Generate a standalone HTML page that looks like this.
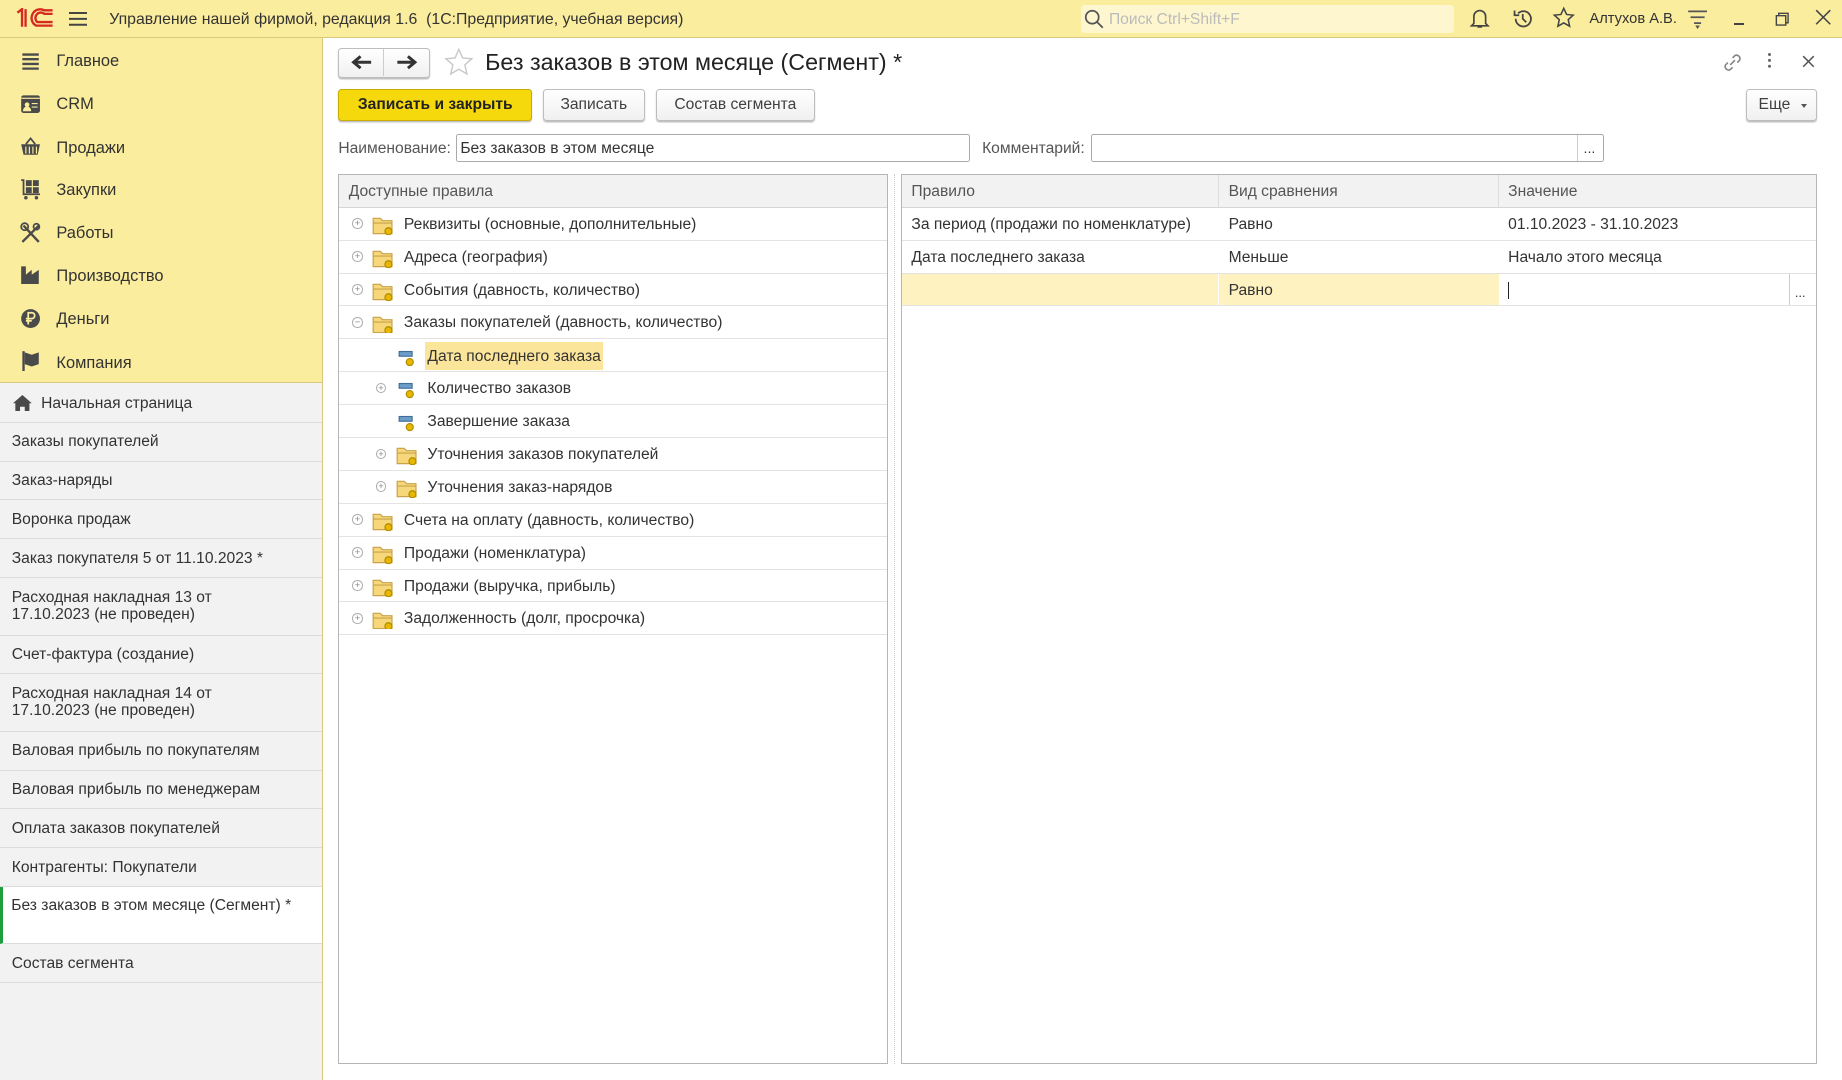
<!DOCTYPE html>
<html><head><meta charset="utf-8"><style>
*{box-sizing:border-box;margin:0;padding:0}
html,body{width:1842px;height:1080px;overflow:hidden;background:#fff}
#w{width:1568px;height:920px;zoom:1.17474;position:relative;font-family:"Liberation Sans",Arial,sans-serif;font-size:13.3px;color:#404040;overflow:hidden}
.a{position:absolute}
#top{left:0;top:0;width:1568px;height:32px;background:#fbed9e;border-bottom:1px solid #d8c97e}
#side{left:0;top:32px;width:275px;height:888px;background:#f2f2f2;border-right:1px solid #d8c97e}
#sideY{left:0;top:0;width:274px;height:294px;background:#fbed9e;border-bottom:1px solid #d8c97e}
.mi{position:absolute;left:48px;font-size:14px;color:#333}
.ic{position:absolute;left:17px;width:18px;height:18px}
.li{position:absolute;left:0;width:274px;border-bottom:1px solid #dcdcdc;padding:9px 30px 7px 10px;line-height:15px;color:#333}
.btn{position:absolute;height:27px;border:1px solid #bdbdbd;border-radius:3px;background:linear-gradient(#fff,#f0f0f0);box-shadow:0 1px 1px rgba(0,0,0,.25);text-align:center;line-height:26px;color:#404040}
.inp{position:absolute;height:24px;border:1px solid #aaa;border-radius:2px;background:#fff;padding-left:3px;line-height:23px;color:#333}
.tbl{position:absolute;border:1px solid #b5b5b5;background:#fff}
.th{position:absolute;top:0;height:28px;background:#f2f2f2;border-bottom:1px solid #d5d5d5;line-height:29px;padding-left:8px;color:#555}
.row{position:absolute;left:0;right:0;height:28px;border-bottom:1px solid #e3e3e3;line-height:29px}
.pl{position:absolute;top:9px;width:9px;height:9px;border:1px solid #aaa;border-radius:50%;font-size:8px;line-height:7px;text-align:center;color:#888}
.fd{position:absolute;top:7px}
.tx{position:absolute;color:#333}
</style></head><body><div id="w">
<div id="top" class="a">
 <svg class="a" style="left:13px;top:7px" width="34" height="17" viewBox="0 0 34 17"><g fill="none" stroke="#d42a20" stroke-width="2"><path d="M2 4 L6 1 V16"/><path d="M9 1 V16"/><path d="M32 15 H18 A7 7 0 1 1 25 2 H32"/><path d="M32 12 H19 A4 4 0 1 1 25 5 H32"/></g></svg>
 <div class="a" style="left:59px;top:10px;width:15px;height:2px;background:#444;box-shadow:0 5px 0 #444,0 10px 0 #444"></div>
 <div class="a" style="left:93px;top:9px;font-size:13.5px;color:#333">Управление нашей фирмой, редакция 1.6 &nbsp;(1С:Предприятие, учебная версия)</div>
 <div class="a" style="left:920px;top:4px;width:318px;height:24px;background:#fdf6cf;border-radius:3px"></div>
 <svg class="a" style="left:923px;top:8px" width="18" height="18"><circle cx="7" cy="7" r="5.5" fill="none" stroke="#555" stroke-width="1.5"/><path d="M11 11l5 5" stroke="#555" stroke-width="1.5"/></svg>
 <div class="a" style="left:944px;top:9px;color:#bbb">Поиск Ctrl+Shift+F</div>
 <svg class="a" style="left:1250px;top:6px" width="20" height="20"><path d="M5 14V8a5 5 0 0110 0v6l2 2H3z M8 17h4" fill="none" stroke="#444" stroke-width="1.4"/></svg>
 <svg class="a" style="left:1286px;top:6px" width="20" height="20"><path d="M4 10a6.5 6.5 0 1 0 2-4.6 M3 3v4h4 M10 6v4l3 3" fill="none" stroke="#444" stroke-width="1.5"/></svg>
 <svg class="a" style="left:1321px;top:5px" width="20" height="20"><path d="M10 2l2.4 5.2 5.6.6-4.2 3.8 1.2 5.6L10 14.4 5 17.2l1.2-5.6L2 7.8l5.6-.6z" fill="none" stroke="#444" stroke-width="1.3"/></svg>
 <div class="a" style="left:1353px;top:9px;font-size:12.5px;color:#333">Алтухов А.В.</div>
 <svg class="a" style="left:1436px;top:8px" width="18" height="18"><path d="M1 2h16M3 7h12M6 12h6" stroke="#555" stroke-width="1.5"/><path d="M7 14h4l-2 3z" fill="#555"/></svg>
 <div class="a" style="left:1476px;top:20px;width:9px;height:1px;background:#444"></div>
 <svg class="a" style="left:1510px;top:9px" width="14" height="14"><path d="M2 4h8v8H2z M4 4V2h8v8h-2" fill="none" stroke="#444" stroke-width="1.2"/></svg>
 <svg class="a" style="left:1545px;top:8px" width="14" height="14"><path d="M1 1l12 12M13 1L1 13" stroke="#444" stroke-width="1.3"/></svg>
</div>
<div id="side" class="a">
 <div id="sideY" class="a">
  <svg class="ic" style="top:11px" viewBox="0 0 18 18"><path d="M2 3h14M2 7h14M2 11h14M2 15h14" stroke="#4a4a4a" stroke-width="2"/></svg>
  <div class="mi" style="top:12px">Главное</div>
  <svg class="ic" style="top:47px" viewBox="0 0 18 18"><rect x="1" y="2" width="16" height="15" rx="2" fill="#4a4a4a"/><rect x="1" y="4" width="16" height="1" fill="#fbed9e"/><circle cx="6" cy="10" r="2" fill="#fbed9e"/><path d="M3 15a3 3 0 016 0zM10 9h5M10 12h5" fill="#fbed9e" stroke="#fbed9e"/></svg>
  <div class="mi" style="top:49px">CRM</div>
  <svg class="ic" style="top:84px" viewBox="0 0 18 18"><path d="M5 7l4-5 4 5" fill="none" stroke="#4a4a4a" stroke-width="1.5"/><path d="M1 7h16l-2 9H3z" fill="#4a4a4a"/><path d="M5 9v6M8 9v6M11 9v6M14 9v6" stroke="#fbed9e"/></svg>
  <div class="mi" style="top:86px">Продажи</div>
  <svg class="ic" style="top:120px" viewBox="0 0 18 18"><path d="M1 1h2v12h14" fill="none" stroke="#4a4a4a" stroke-width="1.5"/><rect x="5" y="1" width="5" height="5" fill="#4a4a4a"/><rect x="11" y="1" width="5" height="5" fill="#4a4a4a"/><rect x="5" y="7" width="5" height="5" fill="#4a4a4a"/><rect x="11" y="7" width="5" height="5" fill="#4a4a4a"/><circle cx="5" cy="16" r="1.5" fill="#4a4a4a"/><circle cx="14" cy="16" r="1.5" fill="#4a4a4a"/></svg>
  <div class="mi" style="top:122px">Закупки</div>
  <svg class="ic" style="top:157px" viewBox="0 0 18 18"><path d="M2 17L16 3M3 3l13 14" stroke="#4a4a4a" stroke-width="2"/><circle cx="4" cy="4" r="3" fill="none" stroke="#4a4a4a" stroke-width="1.5"/><circle cx="14" cy="4" r="2.5" fill="none" stroke="#4a4a4a" stroke-width="1.5"/></svg>
  <div class="mi" style="top:159px">Работы</div>
  <svg class="ic" style="top:193px" viewBox="0 0 18 18"><path d="M1 17V2h4v7l5-4v4l6-4v12z" fill="#4a4a4a"/></svg>
  <div class="mi" style="top:195px">Производство</div>
  <svg class="ic" style="top:230px" viewBox="0 0 18 18"><circle cx="9" cy="9" r="8" fill="#4a4a4a"/><path d="M7 14V4h3a2.5 2.5 0 010 5H5M5 11h5" fill="none" stroke="#fbed9e" stroke-width="1.5"/></svg>
  <div class="mi" style="top:232px">Деньги</div>
  <svg class="ic" style="top:266px" viewBox="0 0 18 18"><path d="M3 1v17" stroke="#4a4a4a" stroke-width="2"/><path d="M4 2l6 2 6-2v10l-6 2-6-2z" fill="#4a4a4a"/></svg>
  <div class="mi" style="top:269px">Компания</div>
 </div>
 <div class="li" style="top:295px;height:33px;padding-left:35px"><svg class="a" style="left:11px;top:9px" width="16" height="14"><path d="M8 0L0 7h2v7h4v-4h4v4h4V7h2z" fill="#4a4a4a"/></svg>Начальная страница</div>
 <div class="li" style="top:328px;height:33px">Заказы покупателей</div>
 <div class="li" style="top:361px;height:33px">Заказ-наряды</div>
 <div class="li" style="top:394px;height:33px">Воронка продаж</div>
 <div class="li" style="top:427px;height:33px">Заказ покупателя 5 от 11.10.2023 *</div>
 <div class="li" style="top:460px;height:49px;padding-right:80px">Расходная накладная 13 от 17.10.2023 (не проведен)</div>
 <div class="li" style="top:509px;height:33px">Счет-фактура (создание)</div>
 <div class="li" style="top:542px;height:49px;padding-right:80px">Расходная накладная 14 от 17.10.2023 (не проведен)</div>
 <div class="li" style="top:591px;height:33px">Валовая прибыль по покупателям</div>
 <div class="li" style="top:624px;height:33px">Валовая прибыль по менеджерам</div>
 <div class="li" style="top:657px;height:33px">Оплата заказов покупателей</div>
 <div class="li" style="top:690px;height:33px">Контрагенты: Покупатели</div>
 <div class="li" style="top:723px;height:49px;background:#fff;border-left:3px solid #1e9e3c;padding-left:7px;padding-right:25px">Без заказов в этом месяце (Сегмент) *</div>
 <div class="li" style="top:772px;height:33px">Состав сегмента</div>
</div>

<div class="btn" style="left:288px;top:41px;width:78px;height:25px"></div>
<div class="a" style="left:326px;top:42px;width:1px;height:23px;background:#ccc"></div>
<svg class="a" style="left:298px;top:46px" width="20" height="14"><path d="M18 7H4M9 2L3 7l6 5" fill="none" stroke="#333" stroke-width="2.5"/></svg>
<svg class="a" style="left:336px;top:46px" width="20" height="14"><path d="M2 7h14M11 2l6 5-6 5" fill="none" stroke="#333" stroke-width="2.5"/></svg>
<svg class="a" style="left:377px;top:40px" width="27" height="27"><path d="M13.5 2l3.2 7.3 7.8.7-5.9 5.2 1.8 7.8-6.9-4.1-6.9 4.1 1.8-7.8L2.5 10l7.8-.7z" fill="none" stroke="#c8c8c8" stroke-width="1.2"/></svg>
<div class="a" style="left:413px;top:42px;font-size:19.8px;color:#222">Без заказов в этом месяце (Сегмент) *</div>
<svg class="a" style="left:1466px;top:44px" width="18" height="18"><path d="M7 11l4-4M9 5l2-2a3 3 0 014 4l-2 2M9 13l-2 2a3 3 0 01-4-4l2-2" fill="none" stroke="#888" stroke-width="1.4"/></svg>
<div class="a" style="left:1505px;top:45px;width:3px;height:3px;background:#666;border-radius:50%;box-shadow:0 5px 0 #666,0 10px 0 #666"></div>
<svg class="a" style="left:1534px;top:47px" width="11" height="11"><path d="M1 1l9 9M10 1l-9 9" stroke="#555" stroke-width="1.3"/></svg>

<div class="btn" style="left:288px;top:76px;width:165px;background:#f5d90d;border-color:#c9ad00;font-weight:bold;color:#222">Записать и закрыть</div>
<div class="btn" style="left:462px;top:76px;width:87px">Записать</div>
<div class="btn" style="left:558px;top:76px;width:136px">Состав сегмента</div>
<div class="btn" style="left:1486px;top:76px;width:61px;padding-right:12px">Еще<span class="a" style="right:8px;top:12px;border:3px solid transparent;border-top:4px solid #555"></span></div>

<div class="a" style="left:288px;top:119px;color:#555">Наименование:</div>
<div class="inp" style="left:388px;top:114px;width:438px">Без заказов в этом месяце</div>
<div class="a" style="left:836px;top:119px;color:#555">Комментарий:</div>
<div class="inp" style="left:929px;top:114px;width:436px"></div>
<div class="a" style="left:1342px;top:115px;width:1px;height:22px;background:#ccc"></div>
<div class="a" style="left:1348px;top:119px;font-size:12px;color:#333">...</div>

<div class="tbl" style="left:288px;top:148px;width:468px;height:758px">
 <div class="th" style="left:0;width:466px">Доступные правила</div>
 <div class="row" style="top:28px"><div class="pl" style="left:11px">+</div><svg class="fd" style="left:28px" width="18" height="16"><path d="M1 2h6l2 2h8v11H1z" fill="#f6d77a" stroke="#c9a24a"/><path d="M1 6h16" stroke="#c9a24a"/><circle cx="14" cy="13" r="3" fill="#e8b800" stroke="#b08a00"/></svg><div class="tx" style="left:55px">Реквизиты (основные, дополнительные)</div></div>
 <div class="row" style="top:56px"><div class="pl" style="left:11px">+</div><svg class="fd" style="left:28px" width="18" height="16"><path d="M1 2h6l2 2h8v11H1z" fill="#f6d77a" stroke="#c9a24a"/><path d="M1 6h16" stroke="#c9a24a"/><circle cx="14" cy="13" r="3" fill="#e8b800" stroke="#b08a00"/></svg><div class="tx" style="left:55px">Адреса (география)</div></div>
 <div class="row" style="top:84px"><div class="pl" style="left:11px">+</div><svg class="fd" style="left:28px" width="18" height="16"><path d="M1 2h6l2 2h8v11H1z" fill="#f6d77a" stroke="#c9a24a"/><path d="M1 6h16" stroke="#c9a24a"/><circle cx="14" cy="13" r="3" fill="#e8b800" stroke="#b08a00"/></svg><div class="tx" style="left:55px">События (давность, количество)</div></div>
 <div class="row" style="top:112px"><div class="pl" style="left:11px">−</div><svg class="fd" style="left:28px" width="18" height="16"><path d="M1 2h6l2 2h8v11H1z" fill="#f6d77a" stroke="#c9a24a"/><path d="M1 6h16" stroke="#c9a24a"/><circle cx="14" cy="13" r="3" fill="#e8b800" stroke="#b08a00"/></svg><div class="tx" style="left:55px">Заказы покупателей (давность, количество)</div></div>
 <div class="row" style="top:140px"><svg class="fd" style="left:50px" width="16" height="16"><rect x="1" y="3" width="11" height="4" fill="#6d9ec9" stroke="#3f6f99"/><circle cx="10" cy="12" r="3" fill="#e8b800" stroke="#b08a00"/></svg><div class="a" style="left:73px;top:2px;height:24px;background:#fbe59a;padding:0 2px;line-height:26px;color:#333">Дата последнего заказа</div></div>
 <div class="row" style="top:168px"><div class="pl" style="left:31px">+</div><svg class="fd" style="left:50px" width="16" height="16"><rect x="1" y="3" width="11" height="4" fill="#6d9ec9" stroke="#3f6f99"/><circle cx="10" cy="12" r="3" fill="#e8b800" stroke="#b08a00"/></svg><div class="tx" style="left:75px">Количество заказов</div></div>
 <div class="row" style="top:196px"><svg class="fd" style="left:50px" width="16" height="16"><rect x="1" y="3" width="11" height="4" fill="#6d9ec9" stroke="#3f6f99"/><circle cx="10" cy="12" r="3" fill="#e8b800" stroke="#b08a00"/></svg><div class="tx" style="left:75px">Завершение заказа</div></div>
 <div class="row" style="top:224px"><div class="pl" style="left:31px">+</div><svg class="fd" style="left:48px" width="18" height="16"><path d="M1 2h6l2 2h8v11H1z" fill="#f6d77a" stroke="#c9a24a"/><path d="M1 6h16" stroke="#c9a24a"/><circle cx="14" cy="13" r="3" fill="#e8b800" stroke="#b08a00"/></svg><div class="tx" style="left:75px">Уточнения заказов покупателей</div></div>
 <div class="row" style="top:252px"><div class="pl" style="left:31px">+</div><svg class="fd" style="left:48px" width="18" height="16"><path d="M1 2h6l2 2h8v11H1z" fill="#f6d77a" stroke="#c9a24a"/><path d="M1 6h16" stroke="#c9a24a"/><circle cx="14" cy="13" r="3" fill="#e8b800" stroke="#b08a00"/></svg><div class="tx" style="left:75px">Уточнения заказ-нарядов</div></div>
 <div class="row" style="top:280px"><div class="pl" style="left:11px">+</div><svg class="fd" style="left:28px" width="18" height="16"><path d="M1 2h6l2 2h8v11H1z" fill="#f6d77a" stroke="#c9a24a"/><path d="M1 6h16" stroke="#c9a24a"/><circle cx="14" cy="13" r="3" fill="#e8b800" stroke="#b08a00"/></svg><div class="tx" style="left:55px">Счета на оплату (давность, количество)</div></div>
 <div class="row" style="top:308px"><div class="pl" style="left:11px">+</div><svg class="fd" style="left:28px" width="18" height="16"><path d="M1 2h6l2 2h8v11H1z" fill="#f6d77a" stroke="#c9a24a"/><path d="M1 6h16" stroke="#c9a24a"/><circle cx="14" cy="13" r="3" fill="#e8b800" stroke="#b08a00"/></svg><div class="tx" style="left:55px">Продажи (номенклатура)</div></div>
 <div class="row" style="top:336px"><div class="pl" style="left:11px">+</div><svg class="fd" style="left:28px" width="18" height="16"><path d="M1 2h6l2 2h8v11H1z" fill="#f6d77a" stroke="#c9a24a"/><path d="M1 6h16" stroke="#c9a24a"/><circle cx="14" cy="13" r="3" fill="#e8b800" stroke="#b08a00"/></svg><div class="tx" style="left:55px">Продажи (выручка, прибыль)</div></div>
 <div class="row" style="top:364px"><div class="pl" style="left:11px">+</div><svg class="fd" style="left:28px" width="18" height="16"><path d="M1 2h6l2 2h8v11H1z" fill="#f6d77a" stroke="#c9a24a"/><path d="M1 6h16" stroke="#c9a24a"/><circle cx="14" cy="13" r="3" fill="#e8b800" stroke="#b08a00"/></svg><div class="tx" style="left:55px">Задолженность (долг, просрочка)</div></div>
</div>
<div class="a" style="left:761px;top:148px;width:0;height:758px;border-left:1px dotted #ccc"></div>

<div class="tbl" style="left:767px;top:148px;width:780px;height:758px">
 <div class="th" style="left:0;width:270px;border-right:1px solid #ddd">Правило</div>
 <div class="th" style="left:270px;width:238px;border-right:1px solid #ddd">Вид сравнения</div>
 <div class="th" style="left:508px;width:270px">Значение</div>
 <div class="row" style="top:28px"><div class="tx" style="left:8px">За период (продажи по номенклатуре)</div><div class="tx" style="left:278px">Равно</div><div class="tx" style="left:516px">01.10.2023 - 31.10.2023</div></div>
 <div class="row" style="top:56px"><div class="tx" style="left:8px">Дата последнего заказа</div><div class="tx" style="left:278px">Меньше</div><div class="tx" style="left:516px">Начало этого месяца</div></div>
 <div class="row" style="top:84px"><div class="a" style="left:0;top:0;width:508px;height:27px;background:#fdf2c0"></div><div class="a" style="left:269px;top:0;width:1px;height:27px;background:#fff"></div><div class="tx" style="left:278px">Равно</div><div class="a" style="left:516px;top:7px;width:1px;height:15px;background:#222"></div><div class="a" style="left:755px;top:0;width:1px;height:27px;background:#ccc"></div><div class="tx" style="left:760px;font-size:11px;top:2px">...</div></div>
</div>
</div></body></html>
